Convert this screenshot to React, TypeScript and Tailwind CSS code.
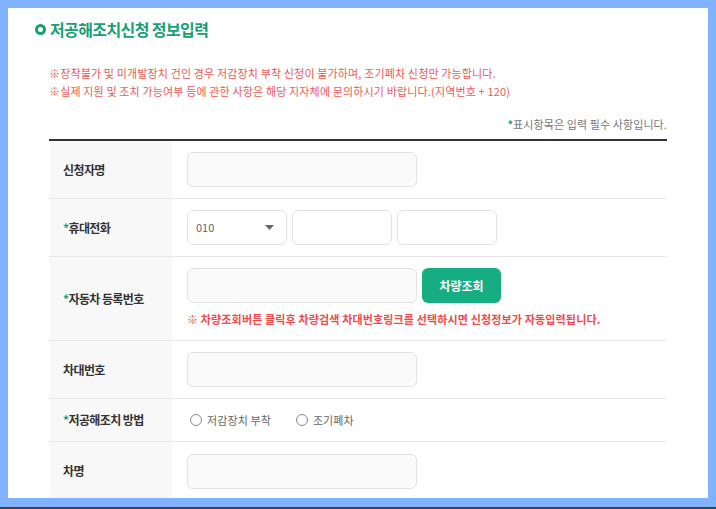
import React from "react";

const font = { fontFamily: '"Noto Sans CJK KR", "Noto Sans", sans-serif' };

function Input({ w = "w-[230px]" }: { w?: string }) {
  return <div className={`${w} h-[35px] rounded-[6px] border border-[#e2e2e2] bg-[#fafafa]`} />;
}

function Row({
  label,
  req,
  h,
  children,
  last,
}: {
  label: string;
  req?: boolean;
  h: string;
  children: React.ReactNode;
  last?: boolean;
}) {
  return (
    <div className={`flex ${h} ${last ? "" : "border-b border-[#e6e6e6]"}`}>
      <div className="w-[123px] shrink-0 bg-[#f8f8f8] flex items-center pl-[14px] text-[12px] font-bold text-[#333] tracking-[-0.6px]">
        {req && <span className="text-[#1aa37a]">*</span>}
        {label}
      </div>
      <div className="flex-1 pl-[15px] flex flex-col justify-center">{children}</div>
    </div>
  );
}

export default function App() {
  return (
    <div className="w-[716px] h-[509px] bg-[#80b2ff] flex flex-col overflow-hidden" style={font}>
      <div className="mx-[8px] mt-[8px] h-[490px] bg-white overflow-hidden">
        <div className="flex items-center h-[18px] mt-[12px] pl-[27px]">
          <div className="w-[11px] h-[11px] rounded-full border-[3px] border-[#1a9e76] mr-[4px]" />
          <div className="text-[16px] font-bold text-[#1a9e76] tracking-[-0.6px] leading-[18px]">
            저공해조치신청 정보입력
          </div>
        </div>
        <div className="px-[41px]">
          <div className="mt-[26px] text-[11px] leading-[18px] text-[#ec5a56] tracking-[0.15px]">
            <div>※장착불가 및 미개발장치 건인 경우 저감장치 부착 신청이 불가하며, 조기폐차 신청만 가능합니다.</div>
            <div>※실제 지원 및 조치 가능여부 등에 관한 사항은 해당 지자체에 문의하시기 바랍니다.(지역번호 + 120)</div>
          </div>
          <div className="mt-[15px] text-right text-[11px] leading-[18px] text-[#777] tracking-[0.1px]">
            <span className="text-[#1aa37a] font-bold">*</span>표시항목은 입력 필수 사항입니다.
          </div>
          <div className="mt-[6px] border-t-2 border-[#333]">
            <Row label="신청자명" h="h-[58px]">
              <Input />
            </Row>
            <Row label="휴대전화" req h="h-[58px]">
              <div className="flex gap-[5px]">
                <div className="w-[100px] h-[35px] rounded-[6px] border border-[#e2e2e2] bg-white flex items-center justify-between pl-[8px] pr-[12px]">
                  <span className="text-[11px] text-[#666]">010</span>
                  <svg width="9" height="5" viewBox="0 0 9 5">
                    <path d="M0 0 L9 0 L4.5 5 Z" fill="#666" />
                  </svg>
                </div>
                <div className="w-[100px] h-[35px] rounded-[6px] border border-[#e2e2e2] bg-white" />
                <div className="w-[100px] h-[35px] rounded-[6px] border border-[#e2e2e2] bg-white" />
              </div>
            </Row>
            <Row label="자동차 등록번호" req h="h-[84px]">
              <div className="flex gap-[5px] mt-[-2px]">
                <Input />
                <div className="w-[79px] h-[35px] rounded-[6px] bg-[#17ad83] flex items-center justify-center text-white text-[12px] font-bold">
                  차량조회
                </div>
              </div>
              <div className="mt-[8px] text-[11px] leading-[16px] font-bold text-[#ee4b4b] tracking-[0.15px]">
                ※ 차량조회버튼 클릭후 차량검색 차대번호링크를 선택하시면 신청정보가 자동입력됩니다.
              </div>
            </Row>
            <Row label="차대번호" h="h-[58px]">
              <Input />
            </Row>
            <Row label="저공해조치 방법" req h="h-[43px]">
              <div className="flex items-center text-[11px] text-[#666] tracking-[0.1px] pl-[3px]">
                <div className="w-[12px] h-[12px] rounded-full border border-[#888] bg-white mr-[5px]" />
                <span>저감장치 부착</span>
                <div className="w-[12px] h-[12px] rounded-full border border-[#888] bg-white ml-[25px] mr-[5px]" />
                <span>조기폐차</span>
              </div>
            </Row>
            <Row label="차명" h="h-[58px]" last>
              <Input />
            </Row>
          </div>
        </div>
      </div>
      <div className="h-[9px] shrink-0" />
      <div className="h-[2px] shrink-0 bg-[#3c4450]" />
    </div>
  );
}
